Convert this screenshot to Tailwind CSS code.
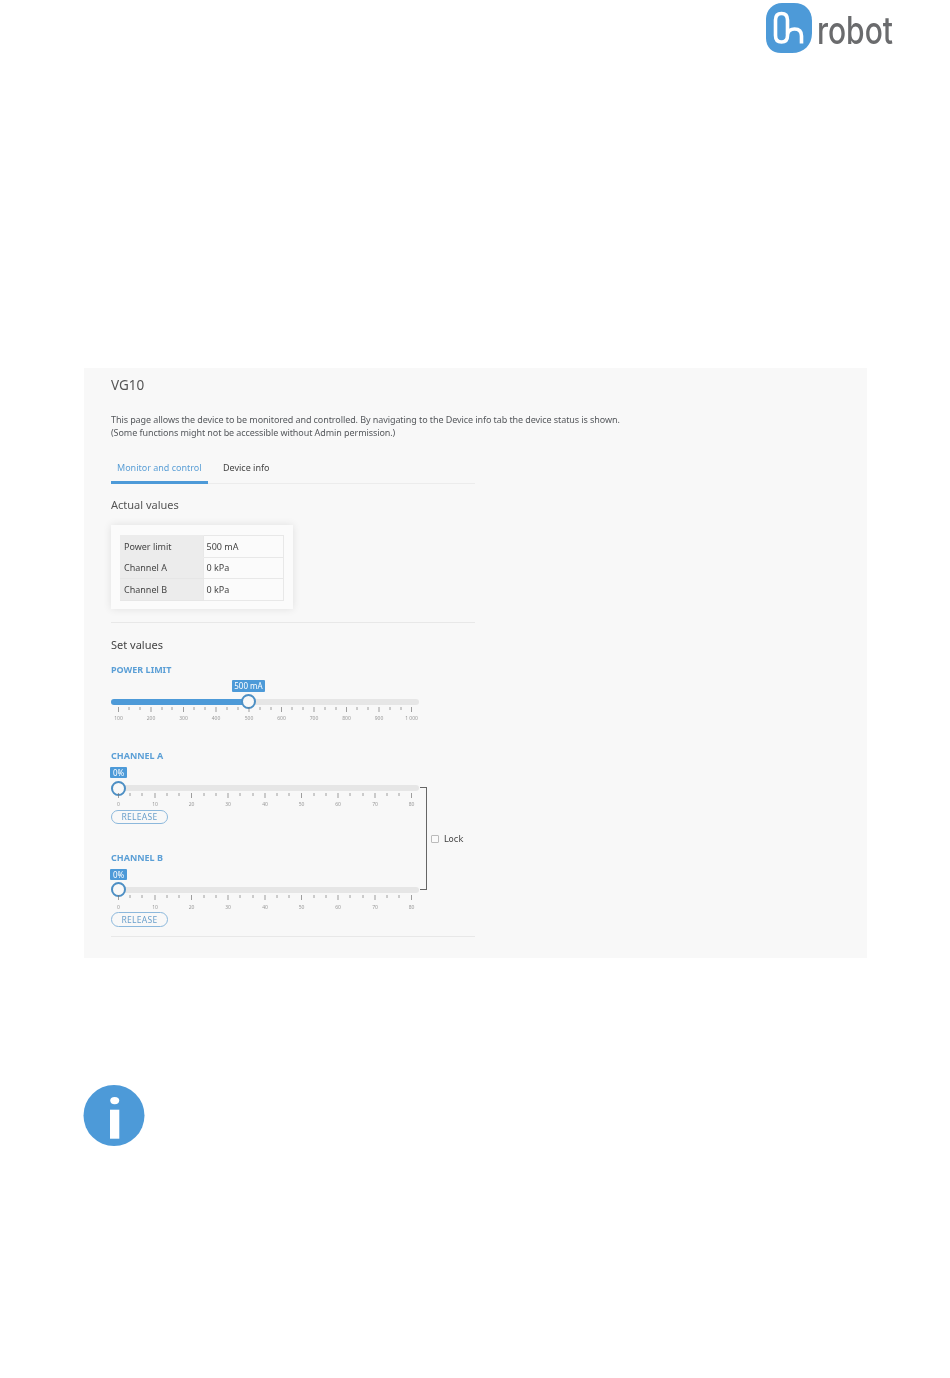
<!DOCTYPE html>
<html><head><meta charset="utf-8"><script src="https://cdn.jsdelivr.net/npm/@tailwindcss/browser@4"></script></head>
<body class="bg-white">
<div class="w-[950px] h-[1378px] overflow-hidden bg-white font-['Noto_Sans',sans-serif]">
  <header class="h-[368px] flex justify-end items-start pt-[3px] pr-[57px]">
    <div class="flex items-start">
      <svg width="46" height="50" viewBox="0 0 46 50" class="shrink-0">
        <path d="M16 0H28C39 0 46 7 46 18V30C46 42 38 50 26 50H15C6 50 0 44 0 35V16C0 7 7 0 16 0Z" fill="#4d9ad8"/>
        <path d="M15.500 10.500C11 10.500 9.500 13.500 9.500 17V32.500C9.500 36 11 39 15.500 39C20 39 21.500 36 21.500 32.500V17C21.500 13.500 20 10.500 15.500 10.500Z" fill="none" stroke="#fff" stroke-width="3.600"/>
        <path d="M21.500 31C22.500 27.500 25 26 28.500 26C33 26 35.500 28.500 35.500 33V40.500" fill="none" stroke="#fff" stroke-width="3.600"/>
      </svg>
      <span class="ml-[5px] mt-[7px] font-['Inter',sans-serif] font-medium text-[30px] leading-[40px] scale-y-125 text-[#6a6b6d]">robot</span>
    </div>
  </header>

  <main class="ml-[84px] w-[783px] h-[590px] bg-[#f8f8f8] pl-[27px] pt-[9px] blur-[0.3px]">
    <h1 class="text-[13.5px] leading-[16px] text-[#555]">VG10</h1>
    <p class="mt-[20px] text-[9px] tracking-[-0.08px] leading-[13px] text-[#55585c]">This page allows the device to be monitored and controlled. By navigating to the Device info tab the device status is shown.<br>(Some functions might not be accessible without Admin permission.)</p>

    <nav class="mt-[8px] w-[364px] h-[37px] flex items-start border-b border-[#ececec] text-[9px] leading-[12px]">
      <a class="w-[97px] h-[37px] pl-[6px] pt-[15px] border-b-[3px] border-[#4d9ad8] text-[#5b9fd6]">Monitor and control</a>
      <a class="ml-[15px] pt-[15px] text-[#444]">Device info</a>
    </nav>

    <h2 class="mt-[13px] text-[11px] leading-[15px] text-[#555]">Actual values</h2>

    <section class="mt-[13px] w-[182px] h-[84px] bg-[#fbfbfb] shadow-[0_0_8px_rgba(0,0,0,0.10)] py-[10px] pl-[9px]">
      <table class="w-[164px] border-collapse text-[9px] text-[#444] table-fixed">
        <tbody>
          <tr class="h-[22px]"><td class="w-[83px] bg-[#ececec] pl-[4px] border-y border-[#ececec]">Power limit</td><td class="pl-[3px] border border-[#e8e8e8]">500 mA</td></tr>
          <tr class="h-[21px]"><td class="bg-[#ececec] pl-[4px] border-y border-[#e6e6e6]">Channel A</td><td class="pl-[3px] border border-[#e8e8e8]">0 kPa</td></tr>
          <tr class="h-[22px]"><td class="bg-[#ececec] pl-[4px] border-y border-[#e6e6e6]">Channel B</td><td class="pl-[3px] border border-[#e8e8e8]">0 kPa</td></tr>
        </tbody>
      </table>
    </section>

    <hr class="mt-[13px] w-[364px] border-t border-[#e8e8e8]">

    <h2 class="mt-[14px] text-[11px] leading-[15px] text-[#444]">Set values</h2>

    <h3 class="mt-[12px] text-[9px] leading-[12px] font-bold text-[#5b9fd6]">POWER LIMIT</h3>
    <div class="relative mt-[3px] w-[308px] h-[70px]">
      <span class="absolute left-[121px] top-[1px] w-[33px] h-[12px] bg-[#4d9ad8] rounded-[1px] text-white text-[8px] leading-[12px] text-center">500 mA</span>
      <div class="absolute left-0 top-[20px] w-[308px] h-[6px] rounded-full bg-[#e6e6e6] overflow-hidden"><div class="w-[138px] h-full bg-[#4d9ad8]"></div></div>
      <div class="absolute left-[130px] top-[15px] w-[15px] h-[15px] rounded-full border-2 border-[#4d8fc4] bg-[#f8f8f8]"></div>
      <svg class="absolute left-0 top-[27px]" width="308" height="18" viewBox="0 0 308 18">
        <path d="M7.500 1v5M40 1v5M72.500 1v5M105 1v5M138 1v5M170.500 1v5M203 1v5M235.500 1v5M268 1v5M300.500 1v5" stroke="#777" stroke-width=".7"/>
        <path d="M18 1v3M29 1v3M51 1v3M61 1v3M83 1v3M94 1v3M116 1v3M127 1v3M149 1v3M160 1v3M181 1v3M192 1v3M214 1v3M225 1v3M246 1v3M257 1v3M279 1v3M290 1v3" stroke="#888" stroke-width=".8"/>
        <g font-size="5" fill="#999" text-anchor="middle">
          <text x="7.500" y="14">100</text><text x="40" y="14">200</text><text x="72.500" y="14">300</text><text x="105" y="14">400</text><text x="138" y="14">500</text><text x="170.500" y="14">600</text><text x="203" y="14">700</text><text x="235.500" y="14">800</text><text x="268" y="14">900</text><text x="300.500" y="14">1 000</text>
        </g>
      </svg>
    </div>

    <div class="relative w-[364px]">
      <div class="absolute left-[309px] top-[38px] w-[7px] h-[103px] border-y border-r border-[#666]"></div>
      <label class="absolute left-[320px] top-[84px] flex items-center text-[8.5px] leading-[12px] text-[#444] font-['DejaVu_Sans',sans-serif]">
        <span class="w-[8px] h-[8px] rounded-[1px] border border-[#bbb] bg-[#fafafa]"></span>
        <span class="ml-[5px]">Lock</span>
      </label>

      <h3 class="pt-[1px] text-[9px] leading-[12px] font-bold text-[#5b9fd6]">CHANNEL A</h3>
      <div class="relative mt-[5px] w-[308px] h-[43px]">
        <span class="absolute left-[-1px] top-0 w-[17px] h-[11px] bg-[#4d9ad8] rounded-[1px] text-white text-[8px] leading-[11px] text-center">0%</span>
        <div class="absolute left-0 top-[18px] w-[308px] h-[6px] rounded-full bg-[#e6e6e6]"></div>
        <div class="absolute left-0 top-[14px] w-[15px] h-[15px] rounded-full border-2 border-[#4d8fc4] bg-[#f8f8f8]"></div>
        <svg class="absolute left-0 top-[25px]" width="308" height="18" viewBox="0 0 308 18">
          <path d="M7.500 1v5M44 1v5M80.500 1v5M117 1v5M154 1v5M190.500 1v5M227 1v5M264 1v5M300.500 1v5" stroke="#777" stroke-width=".7"/>
          <path d="M19 1v3M31 1v3M56 1v3M68 1v3M93 1v3M105 1v3M129 1v3M142 1v3M166 1v3M178 1v3M203 1v3M215 1v3M239 1v3M252 1v3M276 1v3M288 1v3" stroke="#888" stroke-width=".8"/>
          <g font-size="5" fill="#999" text-anchor="middle">
            <text x="7.500" y="14">0</text><text x="44" y="14">10</text><text x="80.500" y="14">20</text><text x="117" y="14">30</text><text x="154" y="14">40</text><text x="190.500" y="14">50</text><text x="227" y="14">60</text><text x="264" y="14">70</text><text x="300.500" y="14">80</text>
          </g>
        </svg>
      </div>
      <button class="block w-[57px] h-[14px] rounded-full border border-[#8cb8dc] text-[8.5px] leading-[12px] text-[#6a9fcb] tracking-[0.3px]">RELEASE</button>

      <h3 class="mt-[28px] text-[9px] leading-[12px] font-bold text-[#5b9fd6]">CHANNEL B</h3>
      <div class="relative mt-[5px] w-[308px] h-[43px]">
        <span class="absolute left-[-1px] top-0 w-[17px] h-[11px] bg-[#4d9ad8] rounded-[1px] text-white text-[8px] leading-[11px] text-center">0%</span>
        <div class="absolute left-0 top-[18px] w-[308px] h-[6px] rounded-full bg-[#e6e6e6]"></div>
        <div class="absolute left-0 top-[13px] w-[15px] h-[15px] rounded-full border-2 border-[#4d8fc4] bg-[#f8f8f8]"></div>
        <svg class="absolute left-0 top-[25px]" width="308" height="18" viewBox="0 0 308 18">
          <path d="M7.500 1v5M44 1v5M80.500 1v5M117 1v5M154 1v5M190.500 1v5M227 1v5M264 1v5M300.500 1v5" stroke="#777" stroke-width=".7"/>
          <path d="M19 1v3M31 1v3M56 1v3M68 1v3M93 1v3M105 1v3M129 1v3M142 1v3M166 1v3M178 1v3M203 1v3M215 1v3M239 1v3M252 1v3M276 1v3M288 1v3" stroke="#888" stroke-width=".8"/>
          <g font-size="5" fill="#999" text-anchor="middle">
            <text x="7.500" y="15">0</text><text x="44" y="15">10</text><text x="80.500" y="15">20</text><text x="117" y="15">30</text><text x="154" y="15">40</text><text x="190.500" y="15">50</text><text x="227" y="15">60</text><text x="264" y="15">70</text><text x="300.500" y="15">80</text>
          </g>
        </svg>
      </div>
      <button class="block w-[57px] h-[15px] rounded-full border border-[#8cb8dc] text-[8.5px] leading-[13px] text-[#6a9fcb] tracking-[0.3px]">RELEASE</button>
    </div>
    <hr class="mt-[9px] w-[364px] border-t border-[#e8e8e8]">
  </main>

  <div class="ml-[83px] mt-[127px]">
    <svg width="63" height="63" viewBox="0 0 63 63" class="block">
      <circle cx="31" cy="30.500" r="30.500" fill="#4d9ad8"/>
      <ellipse cx="31.700" cy="15.600" rx="4.500" ry="3.600" fill="#fff"/>
      <rect x="27" y="24.700" width="9.300" height="29" fill="#fff"/>
    </svg>
  </div>
</div>
</body></html>
